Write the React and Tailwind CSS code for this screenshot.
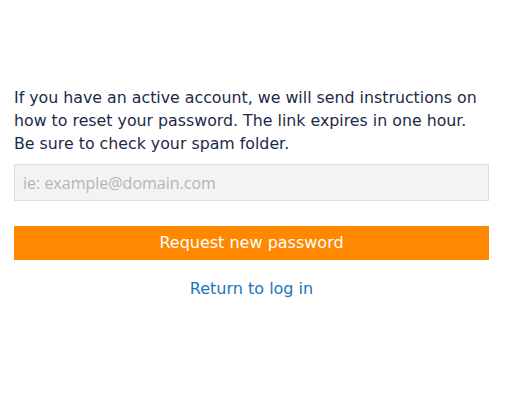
import React from 'react';

const App = () => {
  return (
    <div className="min-h-screen bg-white px-[14px] pt-[86px] font-['DejaVu_Sans',sans-serif]">
      <p className="w-[475px] text-[15.8px] leading-[23px] text-[#1c2a48]">
        If you have an active account, we will send instructions on how to reset your password. The link expires in one hour. Be sure to check your spam folder.
      </p>
      <input
        type="email"
        placeholder="ie: example@domain.com"
        className="mt-[9px] block h-[37px] w-[475px] border border-[#dedede] bg-[#f3f3f3] px-[8px] font-['Open_Sans',sans-serif] text-[16px] text-[#333] placeholder:text-[#b5b5b5] outline-none"
      />
      <button className="mt-[25px] block h-[34px] w-[475px] bg-[#ff8800] text-[16px] text-white">
        Request new password
      </button>
      <div className="mt-[17px] w-[475px] text-center leading-[24px]">
        <a href="#" className="text-[16px] text-[#1b75bb]">
          Return to log in
        </a>
      </div>
    </div>
  );
};

export default App;
